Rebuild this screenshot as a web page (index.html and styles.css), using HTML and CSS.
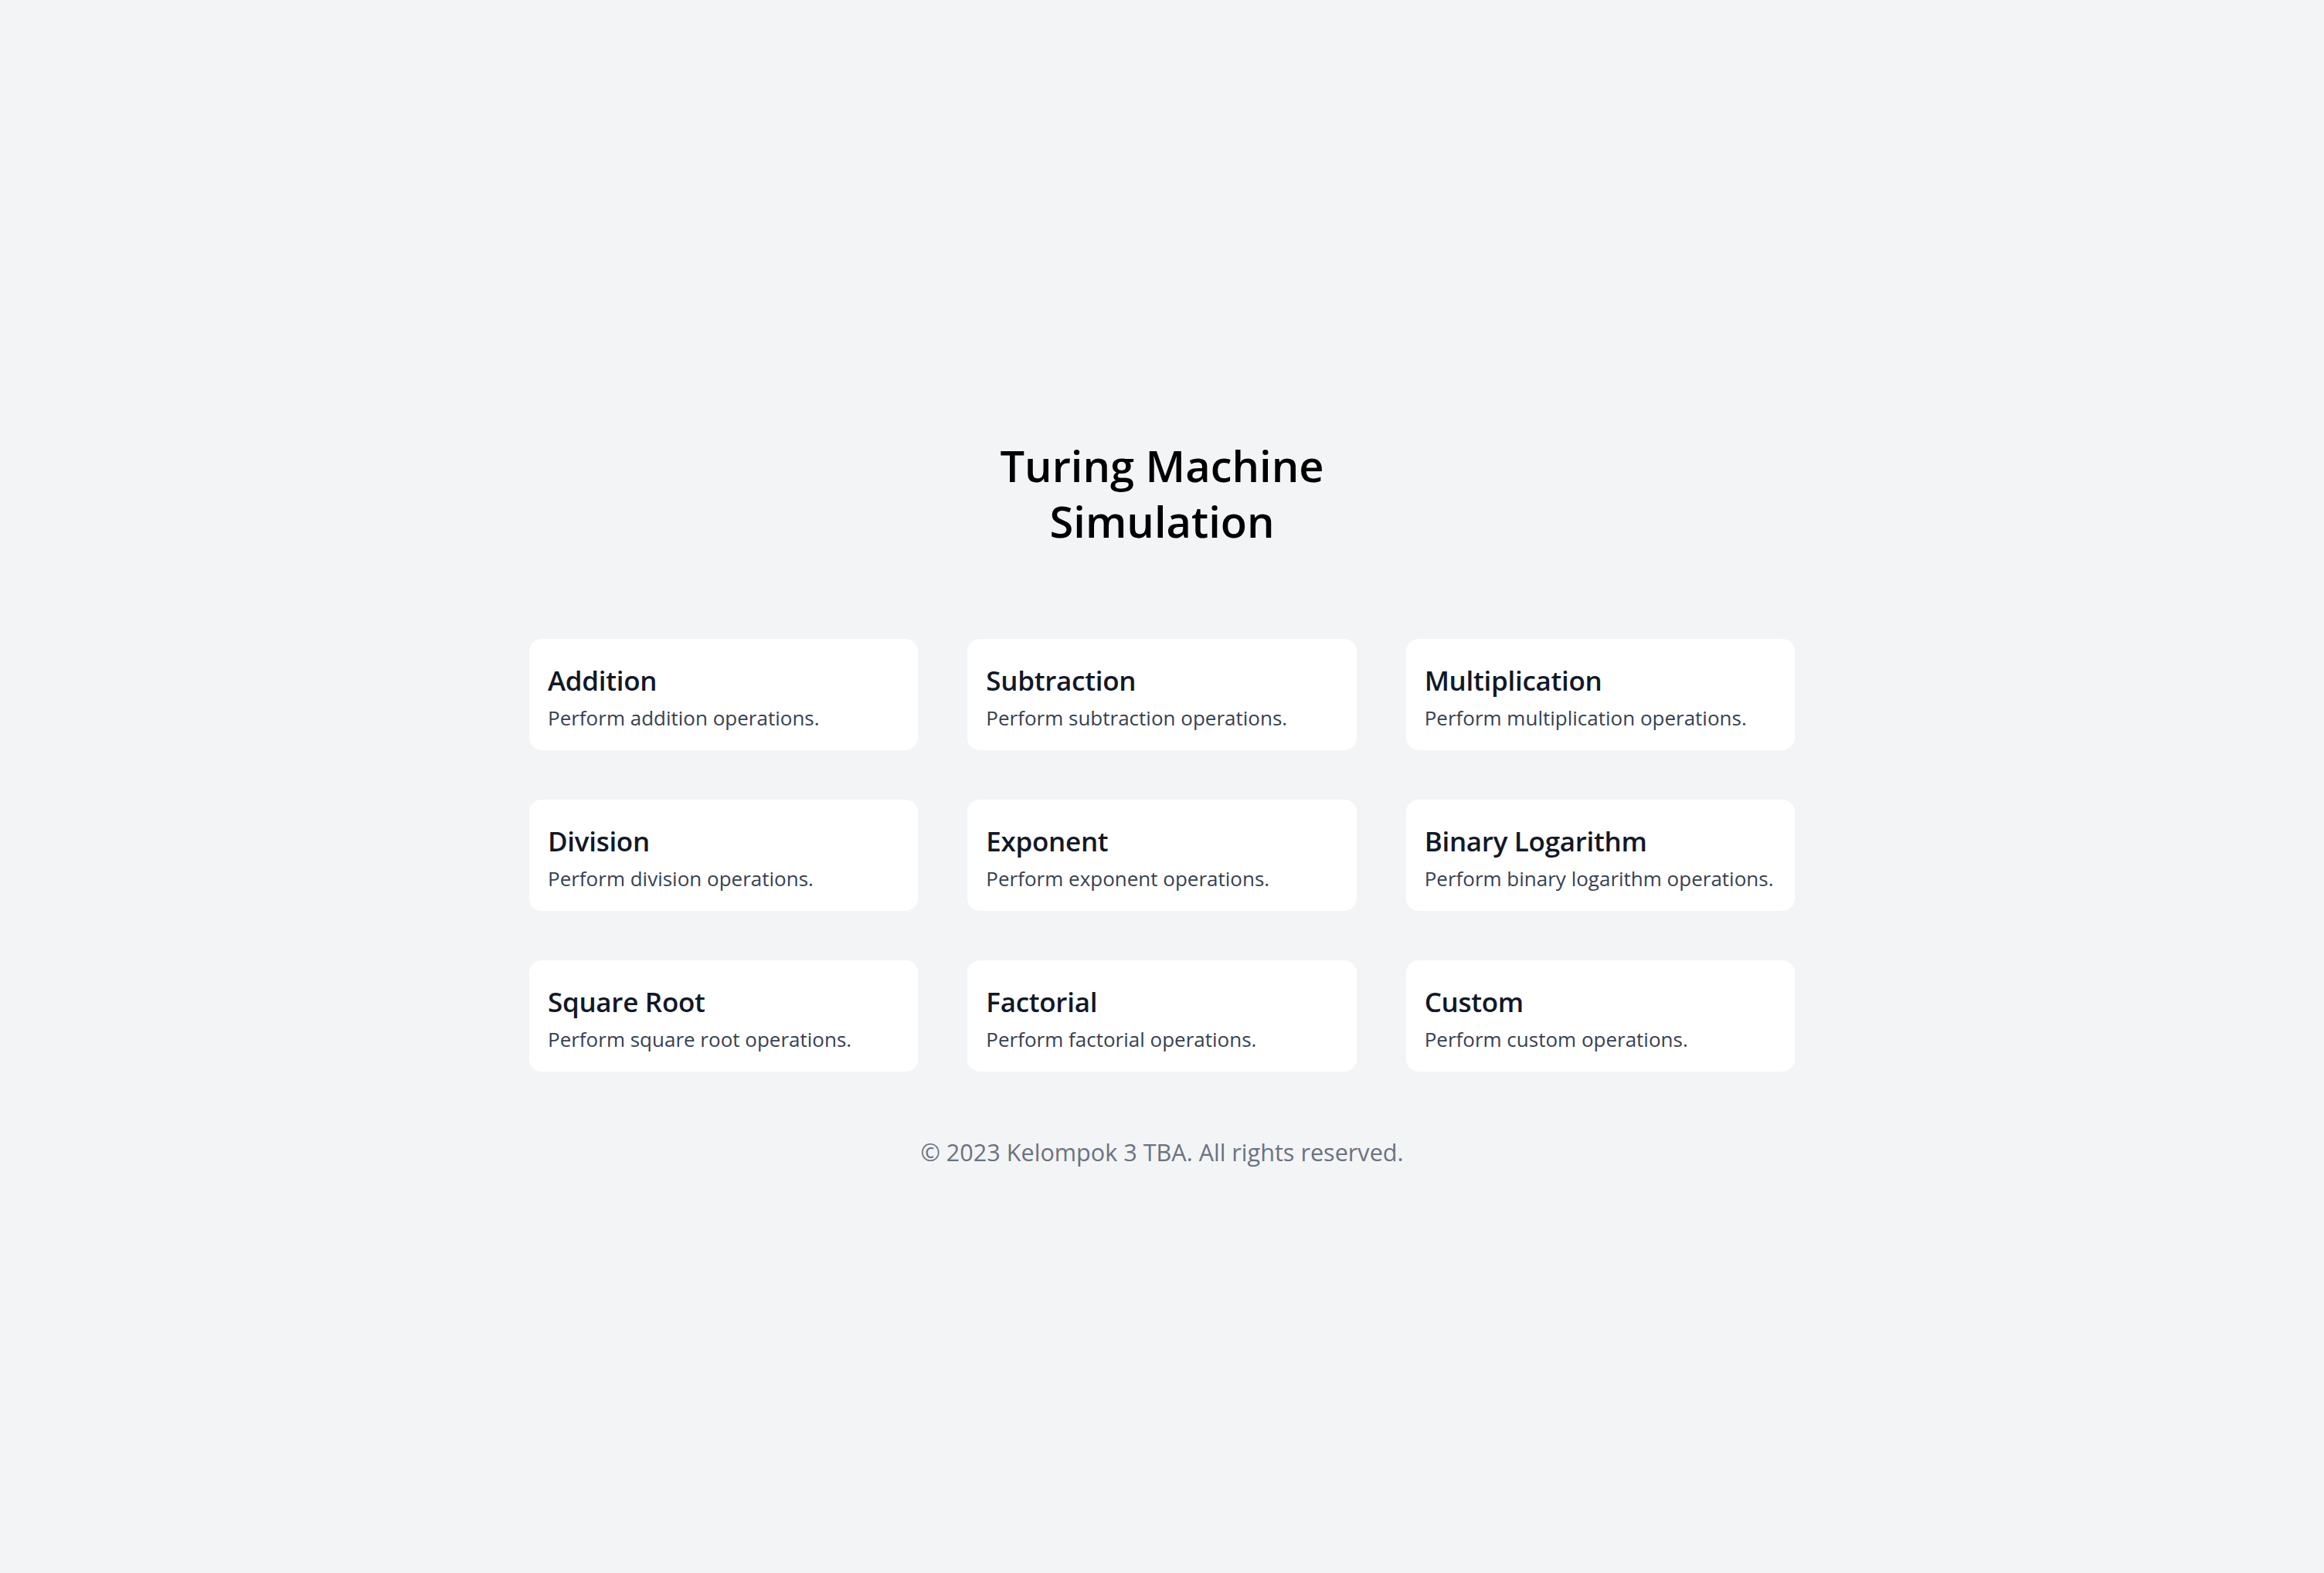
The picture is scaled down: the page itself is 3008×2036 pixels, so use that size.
FILE: index.html
```html
<!DOCTYPE html>
<html lang="en">
<head>
<meta charset="utf-8">
<title>Turing Machine Simulation</title>
<link rel="stylesheet" href="styles.css">
</head>
<body>
<main class="page">
  <h1 class="title">Turing Machine Simulation</h1>
  <div class="grid">
    <a class="card" href="#"><h2 class="card-title">Addition</h2><p class="card-desc">Perform addition operations.</p></a>
    <a class="card" href="#"><h2 class="card-title">Subtraction</h2><p class="card-desc">Perform subtraction operations.</p></a>
    <a class="card" href="#"><h2 class="card-title">Multiplication</h2><p class="card-desc">Perform multiplication operations.</p></a>
    <a class="card" href="#"><h2 class="card-title">Division</h2><p class="card-desc">Perform division operations.</p></a>
    <a class="card" href="#"><h2 class="card-title">Exponent</h2><p class="card-desc">Perform exponent operations.</p></a>
    <a class="card" href="#"><h2 class="card-title">Binary Logarithm</h2><p class="card-desc">Perform binary logarithm operations.</p></a>
    <a class="card" href="#"><h2 class="card-title">Square Root</h2><p class="card-desc">Perform square root operations.</p></a>
    <a class="card" href="#"><h2 class="card-title">Factorial</h2><p class="card-desc">Perform factorial operations.</p></a>
    <a class="card" href="#"><h2 class="card-title">Custom</h2><p class="card-desc">Perform custom operations.</p></a>
  </div>
  <footer class="footer">© 2023 Kelompok 3 TBA. All rights reserved.</footer>
</main>
</body>
</html>
```
FILE: styles.css
```css
* { box-sizing: border-box; }
html, body { margin: 0; padding: 0; }
body {
  background: #f3f4f6;
  font-family: "Open Sans", "Noto Sans", "Liberation Sans", sans-serif;
  min-height: 100vh;
}
.page {
  display: flex;
  flex-direction: column;
  align-items: center;
  padding-top: 566px;
}
.title {
  margin: 0;
  max-width: 560px;
  text-align: center;
  font-size: 56px;
  line-height: 72px;
  font-weight: 600;
  color: #000;
}
.grid {
  margin-top: 117px;
  width: 1638px;
  display: grid;
  grid-template-columns: repeat(3, 1fr);
  gap: 64px;
}
.card {
  display: block;
  background: #fff;
  border-radius: 16px;
  padding: 26px 24px 22px;
  height: 144px;
  text-decoration: none;
}
.card-title {
  margin: 0;
  font-size: 35px;
  line-height: 56px;
  font-weight: 600;
  letter-spacing: -0.3px;
  color: #111827;
}
.card-desc {
  margin: 0;
  font-size: 26px;
  line-height: 40px;
  color: #374151;
}
.footer {
  margin-top: 80px;
  font-size: 30.6px;
  line-height: 48px;
  color: #6b7280;
}
```
